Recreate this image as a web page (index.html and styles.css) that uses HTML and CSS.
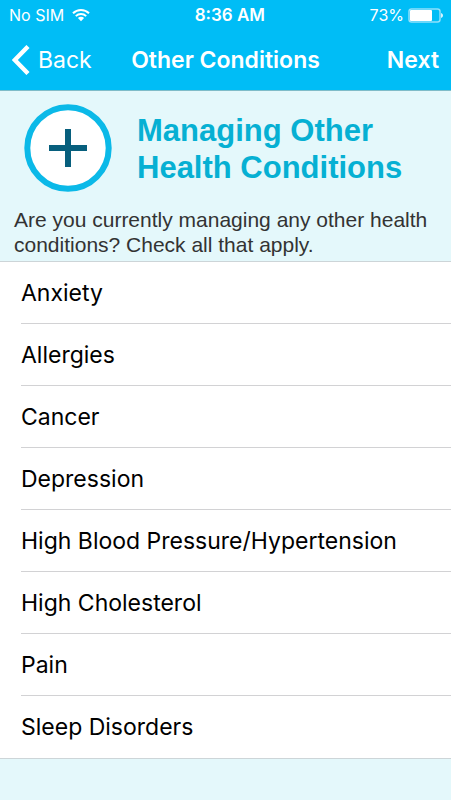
FILE: index.html
```html
<!DOCTYPE html>
<html lang="en">
<head>
<meta charset="utf-8">
<meta name="viewport" content="width=device-width, initial-scale=1">
<title>Other Conditions</title>
<link rel="stylesheet" href="styles.css">
</head>
<body>
<header class="top">
  <div class="status">
    <div class="carrier">
      <span>No SIM</span>
      <svg class="wifi" width="18" height="14" viewBox="0 0 18 14" aria-hidden="true">
        <path d="M1 5.2a11.3 11.3 0 0 1 16 0M3.8 8.1a7.4 7.4 0 0 1 10.4 0" fill="none" stroke="#fff" stroke-width="2"/>
        <path d="M5.9 10.1a4.4 4.4 0 0 1 6.2 0L9 13.2z" fill="#fff"/>
      </svg>
    </div>
    <span class="clock">8:36 AM</span>
    <div class="battery">
      <span>73%</span>
      <svg width="35" height="15" viewBox="0 0 35 15" aria-hidden="true">
        <rect x="1" y="1" width="31" height="13" rx="2.5" fill="none" stroke="#8fe0fb" stroke-width="1.5"/>
        <rect x="2" y="2" width="22" height="11" rx="1" fill="#fff"/>
        <path d="M33 5c1.3.4 2 1.3 2 2.5s-.7 2.1-2 2.5z" fill="#d5f3fd"/>
      </svg>
    </div>
  </div>
  <nav class="bar">
    <button class="back" type="button">
      <svg width="18" height="30" viewBox="0 0 18 30" aria-hidden="true">
        <path d="M16 1.5 2.8 15l13.2 13.500" fill="none" stroke="#fff" stroke-width="4.4"/>
      </svg>
      <span>Back</span>
    </button>
    <h1 class="title">Other Conditions</h1>
    <button class="next" type="button">Next</button>
  </nav>
</header>
<main>
  <section class="intro">
    <div class="heading">
      <svg class="plus" width="88" height="88" viewBox="0 0 88 88" aria-hidden="true">
        <circle cx="44" cy="44" r="40.7" fill="#fff" stroke="#0bb9e8" stroke-width="6"/>
        <path d="M25 44h38M44 25v38" stroke="#075f7d" stroke-width="6"/>
      </svg>
      <h2>Managing Other Health Conditions</h2>
    </div>
    <p class="question">Are you currently managing any other health conditions? Check all that apply.</p>
  </section>
  <form class="list">
    <label class="row"><span>Anxiety</span><input type="checkbox" name="anxiety"></label>
    <label class="row"><span>Allergies</span><input type="checkbox" name="allergies"></label>
    <label class="row"><span>Cancer</span><input type="checkbox" name="cancer"></label>
    <label class="row"><span>Depression</span><input type="checkbox" name="depression"></label>
    <label class="row"><span>High Blood Pressure/Hypertension</span><input type="checkbox" name="hypertension"></label>
    <label class="row"><span>High Cholesterol</span><input type="checkbox" name="cholesterol"></label>
    <label class="row"><span>Pain</span><input type="checkbox" name="pain"></label>
    <label class="row"><span>Sleep Disorders</span><input type="checkbox" name="sleep"></label>
  </form>
</main>
</body>
</html>
```
FILE: styles.css
```css
* {
  box-sizing: border-box;
}

body {
  margin: 0;
  min-height: 100vh;
  background: #e4f8fb;
  color: #000;
  font-family: Inter, "Liberation Sans", sans-serif;
}

.top {
  background: #00bdf6;
  border-bottom: 1px solid #7fbcc8;
  color: #fff;
}

.status {
  display: flex;
  justify-content: space-between;
  align-items: center;
  height: 30px;
  padding: 0 8px 0 9px;
  font-size: 16px;
}

.carrier,
.battery {
  display: flex;
  align-items: center;
  gap: 8px;
}

.battery {
  gap: 4px;
}

.clock {
  font-size: 17px;
  font-weight: 600;
}

.bar {
  display: grid;
  grid-template-columns: 1fr auto 1fr;
  align-items: center;
  height: 60px;
  padding: 0 12px;
}

.bar button {
  padding: 0;
  border: 0;
  background: none;
  color: inherit;
  font: inherit;
  font-size: 23px;
  cursor: pointer;
}

.bar .back {
  display: flex;
  align-items: center;
  justify-self: start;
  gap: 8px;
}

.bar .next {
  justify-self: end;
  font-weight: 600;
}

.title {
  margin: 0;
  font-size: 23px;
  font-weight: 600;
}

.intro {
  padding: 13px 14px 4px;
}

.heading {
  display: flex;
  align-items: center;
  gap: 25px;
  padding-left: 10px;
}

.plus {
  flex: none;
}

.heading h2 {
  margin: 0;
  padding-top: 2px;
  color: #06b0d3;
  font: bold 31px/37px "Liberation Sans", sans-serif;
}

.question {
  margin: 15px 0 0;
  color: #333;
  font: 21px/25px "Liberation Sans", sans-serif;
}

.list {
  padding-left: 21px;
  border: solid #cdd5d8;
  border-width: 1px 0;
  background: #fff;
}

.row {
  display: flex;
  align-items: center;
  justify-content: space-between;
  height: 62px;
  padding-right: 16px;
  border-bottom: 1px solid #d2d2d4;
  font-size: 23px;
  cursor: pointer;
}

.row:last-child {
  border-bottom: 0;
}

.row input {
  flex: none;
  width: 10px;
  height: 18px;
  margin: 0;
  appearance: none;
  transform: rotate(45deg);
}

.row input:checked {
  border: solid #00bdf6;
  border-width: 0 3px 3px 0;
}
```
